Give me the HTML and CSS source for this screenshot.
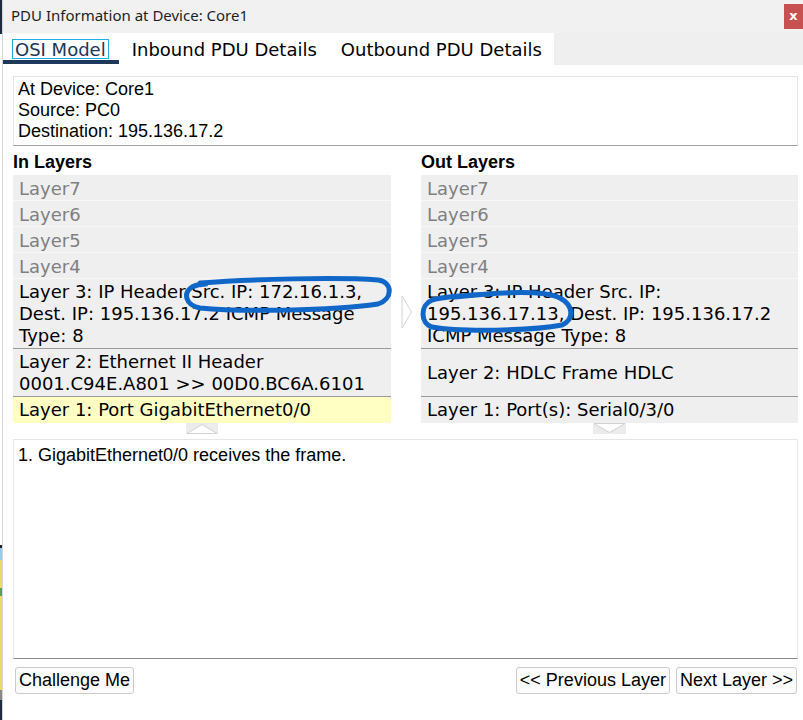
FILE: index.html
```html
<!DOCTYPE html>
<html>
<head>
<meta charset="utf-8">
<title>PDU Information at Device: Core1</title>
<link rel="stylesheet" href="styles.css">
</head>
<body>
<div class="app">
  <div class="edge"></div>
  <div class="window">
    <div class="titlebar">
      <span class="title">PDU Information at Device: Core1</span>
      <span class="close">x</span>
    </div>
    <div class="tabs">
      <div class="tab tab-first active"><span class="focus">OSI Model</span></div>
      <div class="tab tab-second">Inbound PDU Details</div>
      <div class="tab">Outbound PDU Details</div>
      <div class="tab-fill"></div>
    </div>
    <div class="content">
      <div class="info">At Device: Core1<br>Source: PC0<br>Destination: 195.136.17.2</div>
      <div class="layers">
        <div class="col">
          <div class="col-title">In Layers</div>
          <div class="list">
            <div class="row off">Layer7</div>
            <div class="row off">Layer6</div>
            <div class="row off">Layer5</div>
            <div class="row off">Layer4</div>
            <div class="row on">Layer 3: IP Header Src. IP: 172.16.1.3,<br>Dest. IP: 195.136.17.2 ICMP Message<br>Type: 8</div>
            <div class="row on two">Layer 2: Ethernet II Header<br>0001.C94E.A801 &gt;&gt; 00D0.BC6A.6101</div>
            <div class="row on current">Layer 1: Port GigabitEthernet0/0</div>
          </div>
          <div class="pull">
            <svg width="32" height="11" viewBox="0 0 32 11"><rect x="0" y="0" width="32" height="11" fill="#ececec"/><polygon points="1,10.5 16,1.5 31,10.5" fill="#ffffff" stroke="#d2d2d2" stroke-width="1"/></svg>
          </div>
        </div>
        <div class="mid">
          <svg width="12" height="34" viewBox="0 0 12 34"><polygon points="1,1 10.5,17 1,33" fill="#ffffff" stroke="#d4d4d4" stroke-width="1"/></svg>
        </div>
        <div class="col">
          <div class="col-title">Out Layers</div>
          <div class="list">
            <div class="row off">Layer7</div>
            <div class="row off">Layer6</div>
            <div class="row off">Layer5</div>
            <div class="row off">Layer4</div>
            <div class="row on">Layer 3: IP Header Src. IP:<br>195.136.17.13, Dest. IP: 195.136.17.2<br>ICMP Message Type: 8</div>
            <div class="row on two center">Layer 2: HDLC Frame HDLC</div>
            <div class="row on">Layer 1: Port(s): Serial0/3/0</div>
          </div>
          <div class="pull">
            <svg width="33" height="11" viewBox="0 0 33 11"><rect x="0" y="0" width="33" height="11" fill="#ececec"/><polygon points="1,0.5 16.5,9.5 32,0.5" fill="#ffffff" stroke="#d2d2d2" stroke-width="1"/></svg>
          </div>
        </div>
      </div>
      <div class="desc">1. GigabitEthernet0/0 receives the frame.</div>
      <div class="buttons">
        <button class="btn">Challenge Me</button>
        <span class="spacer"></span>
        <button class="btn">&lt;&lt; Previous Layer</button>
        <button class="btn">Next Layer &gt;&gt;</button>
      </div>
    </div>
  </div>
</div>
<svg class="marks" width="803" height="720" viewBox="0 0 803 720">
  <path d="M 200 283 C 250 279, 340 277, 378 280 C 393 282, 393 299, 378 304 C 330 311, 240 312, 200 308 C 185 305, 183 293, 192 287 C 196 285, 200 284, 206 284" fill="none" stroke="#1067c8" stroke-width="5" stroke-linecap="round"/>
  <path d="M 455 297 C 500 292, 545 290, 560 298 C 573 305, 575 319, 562 325 C 530 331, 460 332, 432 327 C 420 323, 420 305, 432 300 C 445 296, 470 295, 490 294" fill="none" stroke="#1067c8" stroke-width="5" stroke-linecap="round"/>
</svg>
</body>
</html>
```
FILE: styles.css
```css
* { box-sizing: border-box; }
html, body { margin: 0; padding: 0; }
body {
  width: 803px;
  height: 720px;
  overflow: hidden;
  background: #ffffff;
  position: relative;
  font-family: "Liberation Sans", Arial, sans-serif;
  color: #000;
}
.app {
  display: flex;
  width: 803px;
  height: 720px;
}
.edge {
  width: 2px;
  flex: none;
  background: linear-gradient(to bottom, #1d2b3c 0, #1d2b3c 34px, #ffffff 34px, #ffffff 545px, #222 545px, #222 548px, #9cc9e6 548px, #9cc9e6 560px, #e6de62 560px, #e6de62 588px, #5f9e48 588px, #5f9e48 596px, #e6de62 596px, #e6de62 690px, #888 690px, #888 700px, #1d2b3c 700px);
}
.window {
  flex: 1;
  display: flex;
  flex-direction: column;
  border-left: 1px solid #d6d6d6;
  background: #fff;
}
.titlebar {
  height: 33px;
  background: #f2f1f2;
  display: flex;
  align-items: flex-start;
  padding-left: 8px;
}
.title {
  font-family: "Noto Sans", "Open Sans", sans-serif;
  font-size: 15px;
  line-height: 20px;
  margin-top: 5px;
  color: #1e1e1e;
}
.close {
  margin-left: auto;
  margin-top: 4px;
  width: 19px;
  height: 25px;
  background: #c75050;
  color: #fff;
  font-family: "DejaVu Sans", sans-serif;
  font-weight: bold;
  font-size: 13px;
  line-height: 24px;
  text-align: center;
}
.tabs {
  height: 32px;
  display: flex;
  align-items: flex-start;
  background: #fff;
  font-family: "DejaVu Sans", Verdana, sans-serif;
  font-size: 18px;
}
.tab {
  height: 31px;
  padding: 7px 12px 0 12px;
  line-height: 19px;
  border-bottom: 4px solid transparent;
  white-space: nowrap;
  color: #000;
}
.tab-first { padding: 6px 10px 0 9px; }
.tab-second { padding-left: 13px; }
.tab.active { border-bottom-color: #1d3a5e; color: #1b3658; }
.focus {
  display: inline-block;
  border: 1px solid #22aee0;
  line-height: 17px;
  padding: 1px 2px 0 2px;
}
.tab-fill {
  flex: 1;
  align-self: stretch;
  background: #efefef;
}
.content {
  flex: 1;
  padding: 11px 5px 0 10px;
  display: flex;
  flex-direction: column;
}
.info {
  border: 1px solid #e4e4e4;
  border-bottom-color: #a2a2a2;
  padding: 2px 4px 3px 4px;
  font-size: 18px;
  line-height: 21px;
  height: 70px;
}
.layers {
  display: grid;
  grid-template-columns: 378px 30px 1fr;
}
.col-title {
  font-weight: bold;
  font-size: 18px;
  line-height: 21px;
  padding-top: 6px;
  height: 29px;
}
.list {
  font-family: "DejaVu Sans", Verdana, sans-serif;
  font-size: 18px;
}
.row {
  background: #efefef;
  padding: 2px 6px 1px 6px;
  line-height: 22px;
  white-space: nowrap;
}
.row.off {
  color: #7f7f7f;
  padding: 3px 6px 0 6px;
  border-bottom: 1px solid #f7f7f7;
}
.row.on {
  border-bottom: 1px solid #9b9b9b;
}
.row.on:last-child { border-bottom: 1px solid #efefef; }
.row.two { height: 48px; }
.row.center { display: flex; align-items: center; }
.row.current { background: #ffffc4; }
.list .row.current { border-bottom-color: #ffffc4; }
.pull {
  display: flex;
  justify-content: center;
  height: 11px;
}
.pull svg { display: block; }
.mid {
  padding-top: 149px;
  padding-left: 10px;
}
.mid svg { display: block; }
.desc {
  margin-top: 5px;
  height: 220px;
  border: 1px solid #e6e6e6;
  border-bottom-color: #8a8a8a;
  padding: 5px 4px 4px 4px;
  font-size: 18px;
  line-height: 21px;
}
.buttons {
  display: flex;
  gap: 6px;
  margin-top: 8px;
  padding: 0 1px 0 2px;
}
.spacer { flex: 1; }
.btn {
  font-family: "Liberation Sans", Arial, sans-serif;
  font-size: 18px;
  line-height: 21px;
  height: 27px;
  padding: 2px 3px;
  border: 1px solid #cbcbcb;
  border-radius: 3px;
  background: #fcfcfc;
  color: #000;
  margin: 0;
}
.marks {
  position: absolute;
  left: 0;
  top: 0;
  pointer-events: none;
}
```
